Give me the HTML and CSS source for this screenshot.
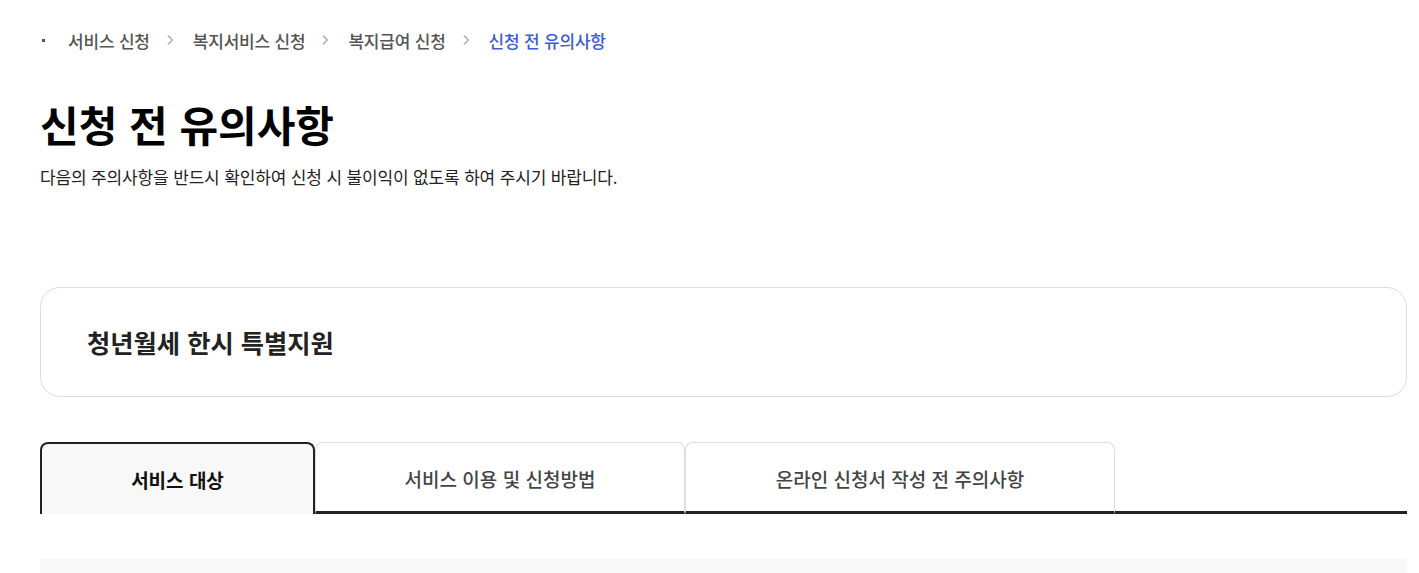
FILE: index.html
```html
<!DOCTYPE html>
<html lang="ko">
<head>
<meta charset="utf-8">
<title>신청 전 유의사항</title>
<link rel="stylesheet" href="styles.css">
</head>
<body>
<div class="page">
  <nav class="breadcrumb">
    <span class="home-dot"></span>
    <span class="crumb">서비스 신청</span>
    <svg class="chev" width="8" height="12" viewBox="0 0 8 12"><path d="M2 1.5l4.2 4.5-4.2 4.5" fill="none" stroke="#b4b4b4" stroke-width="1.8"/></svg>
    <span class="crumb">복지서비스 신청</span>
    <svg class="chev" width="8" height="12" viewBox="0 0 8 12"><path d="M2 1.5l4.2 4.5-4.2 4.5" fill="none" stroke="#b4b4b4" stroke-width="1.8"/></svg>
    <span class="crumb">복지급여 신청</span>
    <svg class="chev" width="8" height="12" viewBox="0 0 8 12"><path d="M2 1.5l4.2 4.5-4.2 4.5" fill="none" stroke="#b4b4b4" stroke-width="1.8"/></svg>
    <span class="crumb current">신청 전 유의사항</span>
  </nav>

  <h1 class="title">신청 전 유의사항</h1>
  <p class="subtitle">다음의 주의사항을 반드시 확인하여 신청 시 불이익이 없도록 하여 주시기 바랍니다.</p>

  <div class="service-card">
    <h2 class="service-name">청년월세 한시 특별지원</h2>
  </div>

  <div class="tabs">
    <div class="tab active tab-1">서비스 대상</div>
    <div class="tab tab-2">서비스 이용 및 신청방법</div>
    <div class="tab tab-3">온라인 신청서 작성 전 주의사항</div>
    <div class="tab-fill"></div>
  </div>

  <div class="content-box"></div>
</div>
</body>
</html>
```
FILE: styles.css
```css
* { box-sizing: border-box; }
html, body {
  margin: 0;
  padding: 0;
  background: #fff;
}
body {
  font-family: "Noto Sans CJK KR", "Noto Sans", sans-serif;
  color: #111;
}
.page {
  width: 1367px;
  margin-left: 40px;
  padding-top: 28px;
}
.breadcrumb {
  display: flex;
  align-items: center;
  height: 24px;
  font-size: 17px;
  font-weight: 500;
  color: #555;
  letter-spacing: -0.2px;
}
.home-dot {
  width: 3px;
  height: 3px;
  background: #555;
  margin: 0 23px 0 2px;
}
.chev {
  margin: 0 19px 0 16px;
}
.crumb.current {
  color: #3d5bd6;
}
.title {
  margin: 45px 0 0;
  font-size: 42px;
  line-height: 54px;
  font-weight: 700;
  letter-spacing: 0;
  color: #000;
}
.subtitle {
  margin: 14px 0 0;
  font-size: 17px;
  line-height: 24px;
  letter-spacing: -0.15px;
  color: #222;
}
.service-card {
  margin-top: 98px;
  height: 110px;
  border: 1px solid #ddd;
  border-radius: 20px;
  display: flex;
  align-items: center;
  padding-left: 46px;
}
.service-name {
  margin: 0;
  font-size: 25.3px;
  font-weight: 700;
  letter-spacing: 0;
  color: #222;
}
.tabs {
  margin-top: 45px;
  display: flex;
  height: 72px;
}
.tab {
  display: flex;
  align-items: center;
  justify-content: center;
  font-size: 19px;
  font-weight: 500;
  color: #444;
  letter-spacing: 0;
  border: 1px solid #ddd;
  border-bottom: 3px solid #222;
  border-radius: 8px 8px 0 0;
  background: #fff;
  padding-top: 2px;
}
.tab.active {
  border: 2px solid #222;
  border-bottom: none;
  background: #f8f8f8;
  font-weight: 700;
  color: #111;
  padding-top: 0;
}
.tab-1 { width: 275px; }
.tab-2 { width: 370px; }
.tab-3 { width: 430px; }
.tab-fill {
  flex: 1;
  border-bottom: 3px solid #222;
}
.content-box {
  margin-top: 45px;
  height: 40px;
  background: #f8f8f8;
}
```
